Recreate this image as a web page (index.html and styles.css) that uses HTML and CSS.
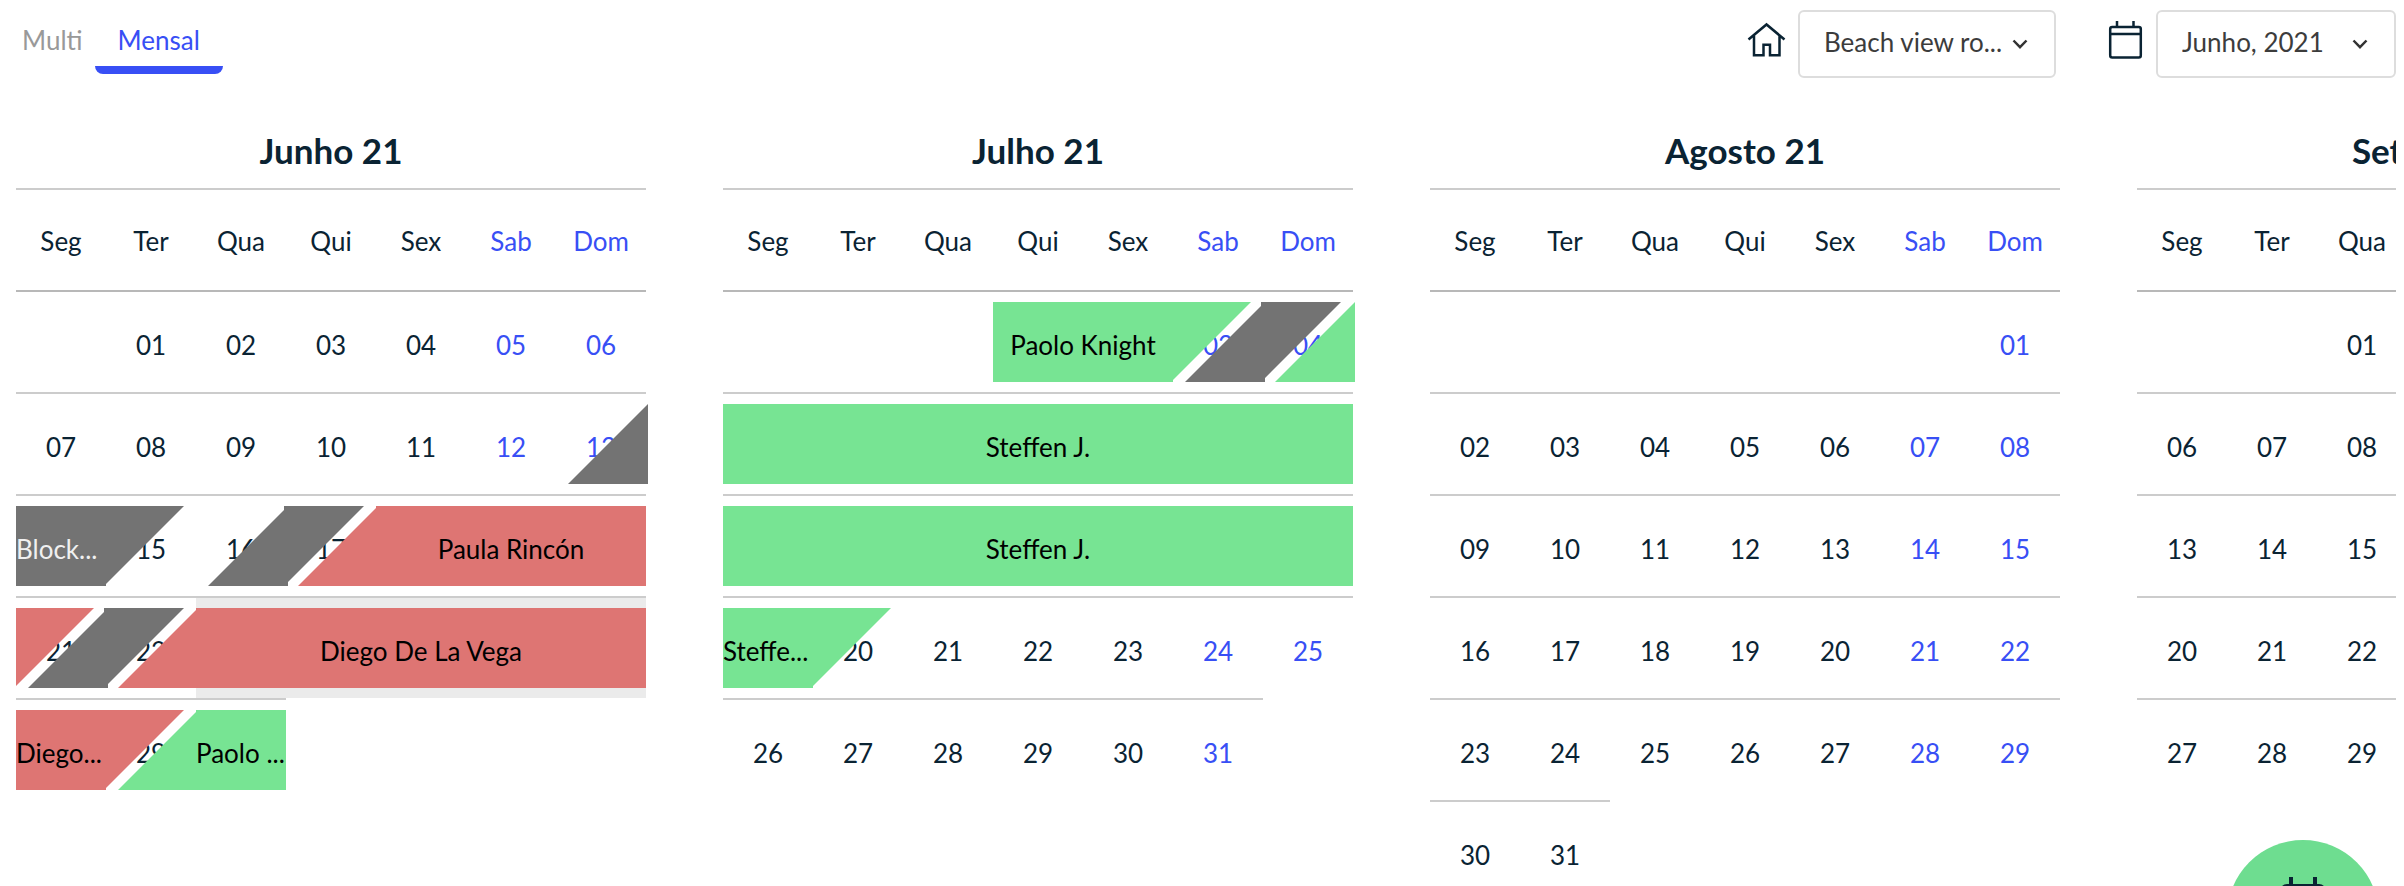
FILE: index.html
```html
<!DOCTYPE html>
<html lang="pt">
<head>
<meta charset="utf-8">
<title>Calendário</title>
<link rel="stylesheet" href="styles.css">
</head>
<body>
<header class="topbar">
  <nav class="tabs">
    <a class="tab" href="#multi">Multi</a>
    <a class="tab tab-active" href="#mensal" aria-current="page">Mensal</a>
  </nav>
  <div class="filters">
    <div class="filter filter-room">
      <svg class="icon" viewBox="0 0 40 40" aria-hidden="true"><path d="M2.500 19.500 20.500 4.500l18 15M8 15.500v19.700h9.500V24.800h6.500v10.400h9.500V15.500"/></svg>
      <div class="select-box">
        <select class="select" aria-label="Quarto"><option>Beach view ro...</option></select>
        <svg class="chevron" viewBox="0 0 16 10" aria-hidden="true"><path d="M1.500 1.500 8 8.200l6.500-6.700"/></svg>
      </div>
    </div>
    <div class="filter filter-month">
      <svg class="icon" viewBox="0 0 40 40" aria-hidden="true"><rect x="6.200" y="7" width="30.600" height="30.600" rx="2"/><path d="M6.200 14h30.600M13 1v6M29.500 1v6"/></svg>
      <div class="select-box">
        <select class="select" aria-label="Mês"><option>Junho, 2021</option></select>
        <svg class="chevron" viewBox="0 0 16 10" aria-hidden="true"><path d="M1.500 1.500 8 8.200l6.500-6.700"/></svg>
      </div>
    </div>
  </div>
</header>
<main class="months" id="months"></main>
<button class="fab" aria-label="Nova reserva">
  <svg class="fab-icon" viewBox="0 0 50 60" aria-hidden="true"><path d="M13 1v9M37 1v9"/><rect x="4" y="10" width="42" height="44" rx="5"/><path d="M4 21h42"/></svg>
</button>
<script src="calendar.js"></script>
</body>
</html>
```
FILE: styles.css
```css
* { box-sizing: border-box; }

body {
  margin: 0;
  height: 100vh;
  overflow: hidden;
  padding: 0 8px 0 16px;
  background: #fff;
  color: #0a2333;
  font-family: Lato, "Open Sans", sans-serif;
  font-size: 26px;
  line-height: 32px;
}

.topbar {
  display: flex;
  justify-content: space-between;
  align-items: flex-start;
  height: 120px;
}

.tabs { display: flex; }

.tab {
  height: 74px;
  padding: 24px 12px 0 6px;
  color: #999;
  text-decoration: none;
}

.tab-active {
  padding: 24px 23px 0;
  color: #384ff5;
  border-bottom: 8px solid #384ff5;
  border-radius: 0 0 8px 8px;
}

.filters {
  display: flex;
  gap: 48px;
  padding-top: 10px;
}

.filter {
  display: flex;
  gap: 12px;
}

.icon {
  width: 40px;
  height: 40px;
  margin-top: 10px;
  fill: none;
  stroke: #0a2333;
  stroke-width: 2.5;
}

.select-box { position: relative; }

.select {
  width: 100%;
  height: 68px;
  padding: 0 24px 4px;
  border: 2px solid #ddd;
  border-radius: 6px;
  background: #fff;
  color: #3c3c3c;
  font: inherit;
  appearance: none;
}

.filter-room .select-box { width: 258px; }
.filter-month .select-box { width: 240px; }

.chevron {
  position: absolute;
  right: 28px;
  top: 29px;
  width: 16px;
  height: 10px;
  fill: none;
  stroke: #333;
  stroke-width: 2.5;
  pointer-events: none;
}

.months {
  display: grid;
  grid-auto-flow: column;
  grid-auto-columns: 630px;
  column-gap: 77px;
  align-items: start;
  overflow: hidden;
}

.month-name {
  margin: 0;
  height: 68px;
  padding-top: 10px;
  font-size: 35px;
  line-height: 40px;
  text-align: center;
}

.week {
  display: grid;
  grid-template-columns: repeat(7, 1fr);
  grid-template-rows: 102px;
}

.cell {
  grid-row: 1;
  display: flex;
  align-items: center;
  justify-content: center;
  padding-top: 6px;
  border-top: 2px solid #ccc;
}

.week-head .cell { padding-top: 2px; }
.week-first .cell { border-top-color: #b8b8b8; }
.weekend { color: #384ff5; }
.hovered { background: #ebebeb; }

.bar {
  grid-row: 1;
  display: flex;
  align-items: center;
  justify-content: center;
  height: 80px;
  margin-top: 12px;
  padding-top: 6px;
  color: #000;
  white-space: nowrap;
  z-index: 1;
}

.bar-short { justify-content: flex-start; }

.green { background: #77e493; }
.red { background: #de7573; }
.grey { background: #737373; color: #f0f0f0; }

.bar-in {
  padding-left: 90px;
  clip-path: polygon(90px 0, 100% 0, 100% 100%, 12px 100%, 90px 2px);
}

.bar-out {
  padding-right: 90px;
  clip-path: polygon(0 0, calc(100% - 12px) 0, calc(100% - 90px) 78px, calc(100% - 90px) 100%, 0 100%);
}

.bar-both {
  clip-path: polygon(88px 0, calc(100% - 12px) 0, calc(100% - 88px) 76px, calc(100% - 88px) 100%, 12px 100%, 88px 4px);
}

.bar-corner {
  margin-right: -2px;
  clip-path: polygon(100% 0, 100% 100%, 12px 100%);
}

.fab {
  position: fixed;
  right: 25px;
  bottom: -106px;
  display: flex;
  align-items: flex-start;
  justify-content: center;
  width: 152px;
  height: 152px;
  padding: 36px 0 0;
  border: 0;
  border-radius: 50%;
  background: #6edd90;
  z-index: 2;
}

.fab-icon {
  width: 50px;
  height: 60px;
  fill: none;
  stroke: #0a2333;
  stroke-width: 4;
}
```
FILE: calendar.js
```js
const dayNames = ["Seg", "Ter", "Qua", "Qui", "Sex", "Sab", "Dom"];

// start: column of day 1. Bars: [week, first column, last column, colour, shape, label]
const months = [
  { name: "Junho 21", start: 1, days: 30, hover: [3, 2, 6], bars: [
    [1, 6, 6, "grey", "corner", ""],
    [2, 0, 1, "grey", "out", "Block..."],
    [2, 2, 3, "grey", "both", ""],
    [2, 3, 6, "red", "in", "Paula Rincón"],
    [3, 0, 0, "red", "out", ""],
    [3, 0, 1, "grey", "both", ""],
    [3, 1, 6, "red", "in", "Diego De La Vega"],
    [4, 0, 1, "red", "out", "Diego..."],
    [4, 1, 2, "green", "in", "Paolo ..."]
  ] },
  { name: "Julho 21", start: 3, days: 31, bars: [
    [0, 3, 5, "green", "out", "Paolo Knight"],
    [0, 5, 6, "grey", "both", ""],
    [0, 6, 6, "green", "corner", ""],
    [1, 0, 6, "green", "full", "Steffen J."],
    [2, 0, 6, "green", "full", "Steffen J."],
    [3, 0, 1, "green", "out", "Steffe..."]
  ] },
  { name: "Agosto 21", start: 6, days: 31, bars: [] },
  { name: "Setembro 21", start: 2, days: 30, bars: [] }
];

function element(tag, className, text) {
  const node = document.createElement(tag);
  node.className = className;
  if (text) node.textContent = text;
  return node;
}

function cell(column, text) {
  const node = element("div", column > 4 ? "cell weekend" : "cell", text);
  node.style.gridColumn = column + 1;
  return node;
}

const root = document.getElementById("months");
for (const month of months) {
  const section = element("section", "month");
  section.append(element("h2", "month-name", month.name));
  const head = element("div", "week week-head");
  dayNames.forEach((name, column) => head.append(cell(column, name)));
  section.append(head);

  const weeks = Math.ceil((month.start + month.days) / 7);
  for (let week = 0; week < weeks; week++) {
    const row = element("div", week === 0 ? "week week-first" : "week");
    for (let column = 0; column < 7; column++) {
      const day = week * 7 + column - month.start + 1;
      if (day > month.days) break;
      const node = cell(column, day > 0 ? String(day).padStart(2, "0") : "");
      const hover = month.hover;
      if (hover && hover[0] === week && column >= hover[1] && column <= hover[2]) {
        node.classList.add("hovered");
      }
      row.append(node);
    }
    for (const [barWeek, from, to, colour, shape, label] of month.bars) {
      if (barWeek !== week) continue;
      const bar = element("div", `bar ${colour} bar-${shape}`, label);
      if (label.endsWith("...")) bar.classList.add("bar-short");
      bar.style.gridColumn = `${from + 1} / ${to + 2}`;
      row.append(bar);
    }
    section.append(row);
  }
  root.append(section);
}
```
